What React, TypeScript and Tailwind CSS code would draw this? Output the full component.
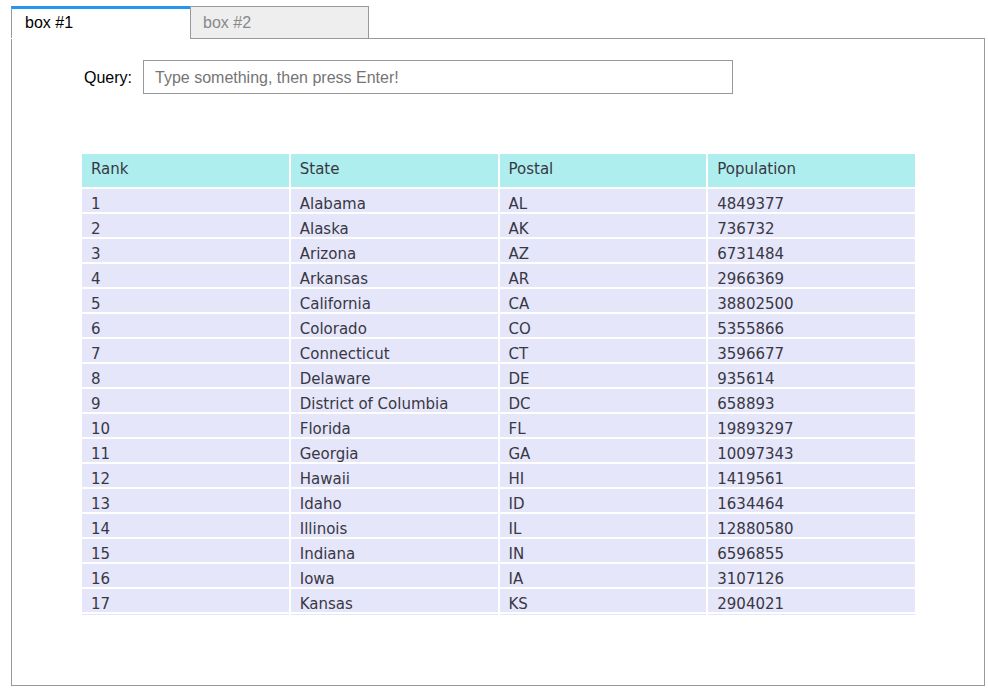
const states: [number, string, string, number][] = [
  [1, 'Alabama', 'AL', 4849377],
  [2, 'Alaska', 'AK', 736732],
  [3, 'Arizona', 'AZ', 6731484],
  [4, 'Arkansas', 'AR', 2966369],
  [5, 'California', 'CA', 38802500],
  [6, 'Colorado', 'CO', 5355866],
  [7, 'Connecticut', 'CT', 3596677],
  [8, 'Delaware', 'DE', 935614],
  [9, 'District of Columbia', 'DC', 658893],
  [10, 'Florida', 'FL', 19893297],
  [11, 'Georgia', 'GA', 10097343],
  [12, 'Hawaii', 'HI', 1419561],
  [13, 'Idaho', 'ID', 1634464],
  [14, 'Illinois', 'IL', 12880580],
  [15, 'Indiana', 'IN', 6596855],
  [16, 'Iowa', 'IA', 3107126],
  [17, 'Kansas', 'KS', 2904021],
  [18, 'Kentucky', 'KY', 4413457],
]

export default function App() {
  return (
    <div className="w-[988px] h-[691px] bg-white pt-[6px] pl-[11px] font-['Liberation_Sans',Arial,sans-serif] text-[16px]">
      <div className="flex w-[974px]">
        <div className="w-[179px] h-[32px] border-t-[3px] border-t-[#2196f3] border-l border-l-[#999] pl-[13px] pt-[2px] text-black">
          box #1
        </div>
        <div className="w-[179px] h-[33px] border border-[#999] bg-[#eeeeee] pl-[12px] pt-[4px] text-[#888]">
          box #2
        </div>
        <div className="flex-1 border-b border-[#999]"></div>
      </div>
      <div className="w-[974px] h-[647px] border border-t-0 border-[#999] pt-[21px]">
        <div className="flex items-center pl-[72px]">
          <span className="text-black mr-[11px] pt-[1px]">Query:</span>
          <input
            className="w-[590px] h-[34px] border border-[#999] px-[11px] pt-[1px] outline-none placeholder:text-[#757575]"
            placeholder="Type something, then press Enter!"
          />
        </div>
        <div className="ml-[68px] mt-[58px] h-[463px] overflow-hidden">
          <table className="w-[837px] table-fixed border-separate border-spacing-[2px] font-['DejaVu_Sans',Verdana,sans-serif] text-[15px] text-[#383844]">
            <thead>
              <tr className="bg-[#afeeee]">
                {['Rank', 'State', 'Postal', 'Population'].map((h) => (
                  <th key={h} className="h-[33px] px-[9px] pt-[6px] pb-[9px] text-left font-normal leading-[18px] align-top">
                    {h}
                  </th>
                ))}
              </tr>
            </thead>
            <tbody>
              {states.map(([rank, name, postal, pop]) => (
                <tr key={rank} className="bg-[#e6e6fa]">
                  {[rank, name, postal, pop].map((v, i) => (
                    <td key={i} className="h-[23px] px-[9px] pt-[7px] pb-0 leading-[16px] align-top whitespace-nowrap">
                      {v}
                    </td>
                  ))}
                </tr>
              ))}
            </tbody>
          </table>
        </div>
      </div>
    </div>
  )
}
